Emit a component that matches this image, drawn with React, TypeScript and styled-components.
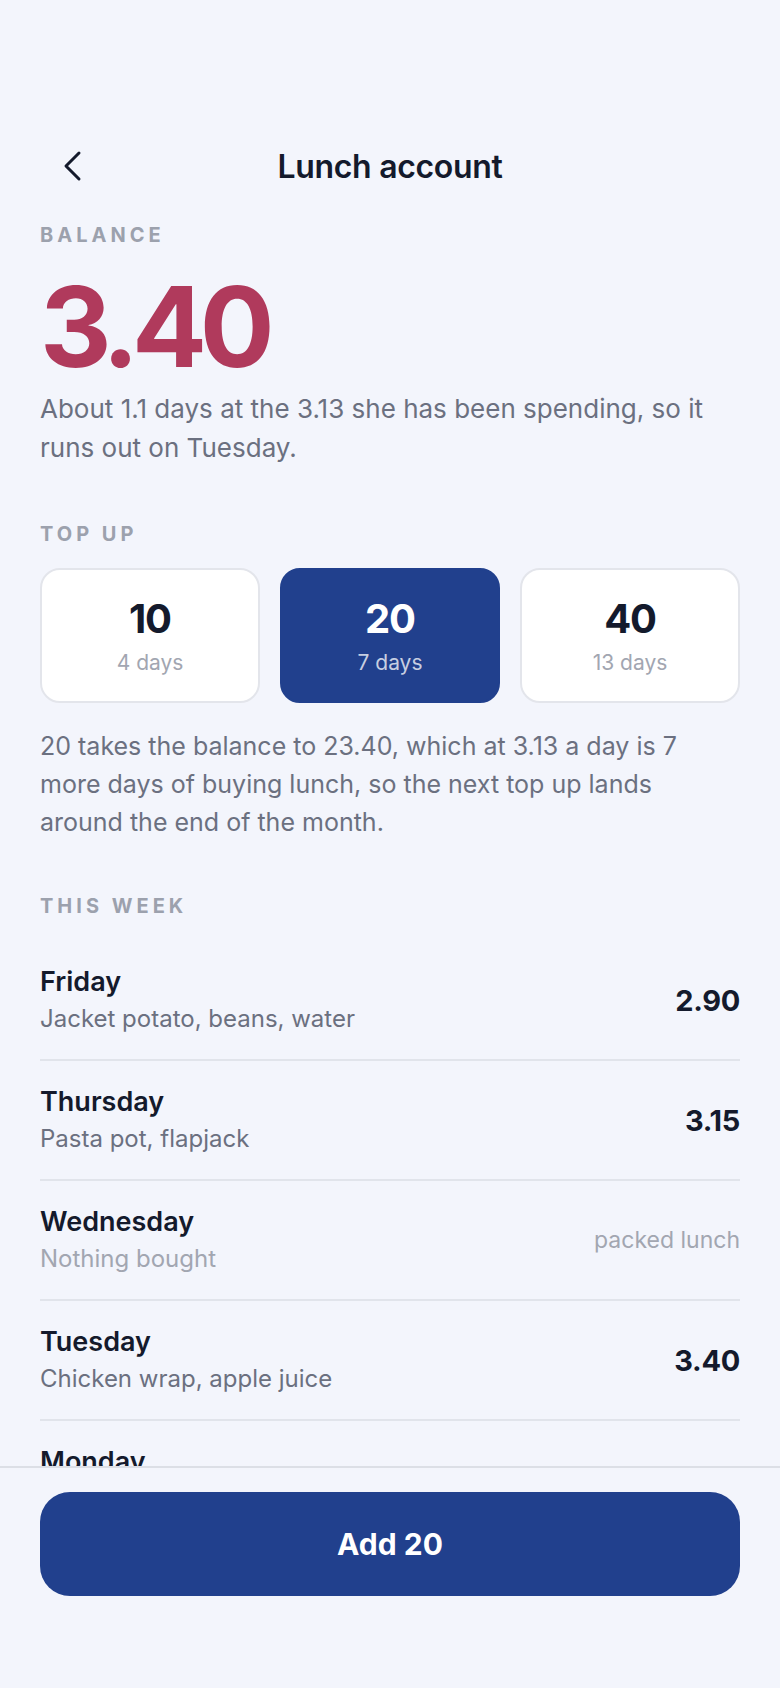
import styled, { createGlobalStyle } from 'styled-components';

const GlobalStyle = createGlobalStyle`
  * { box-sizing: border-box; }
  html, body {
    margin: 0;
    padding: 0;
    background: #f3f5fc;
    font-family: Inter, "Noto Sans", "Liberation Sans", sans-serif;
  }
`;

const Screen = styled.div`
  height: 100vh;
  display: flex;
  flex-direction: column;
  background: #f3f5fc;
  color: #141a2c;
`;

const Scroll = styled.main`
  flex: 1;
  min-height: 0;
  overflow: hidden;
  padding: 134px 40px 0;
`;

const Header = styled.header`
  height: 64px;
  display: grid;
  grid-template-columns: 1fr auto 1fr;
  align-items: center;
`;

const BackButton = styled.button`
  justify-self: start;
  width: 44px;
  height: 44px;
  margin-left: 10px;
  padding: 0;
  border: none;
  background: transparent;
  color: #141a2c;
  display: flex;
  align-items: center;
  justify-content: center;
  cursor: pointer;
`;

const Title = styled.h1`
  margin: 0;
  font-size: 32px;
  font-weight: 600;
  letter-spacing: -0.01em;
`;

const Eyebrow = styled.div<{ $top: number }>`
  margin-top: ${p => p.$top}px;
  font-size: 20px;
  line-height: 26px;
  font-weight: 700;
  letter-spacing: 0.2em;
  text-transform: uppercase;
  color: #9ca1ad;
`;

const Balance = styled.div`
  margin-top: 24px;
  font-size: 111px;
  line-height: 110px;
  font-weight: 700;
  letter-spacing: -0.065em;
  color: #b03a5c;
`;

const Note = styled.p<{ $top: number; $size: number; $lh: number }>`
  margin: ${p => p.$top}px 0 0;
  font-size: ${p => p.$size}px;
  line-height: ${p => p.$lh}px;
  color: #6b7080;
`;

const Options = styled.div`
  margin-top: 21px;
  display: grid;
  grid-template-columns: repeat(3, 1fr);
  gap: 20px;
`;

const Option = styled.button<{ $active?: boolean }>`
  height: 135px;
  border-radius: 20px;
  border: 2px solid ${p => (p.$active ? '#21408d' : '#e3e5eb')};
  background: ${p => (p.$active ? '#21408d' : '#ffffff')};
  display: flex;
  flex-direction: column;
  align-items: center;
  justify-content: center;
  gap: 6px;
  font-family: inherit;
  cursor: pointer;
`;

const OptionAmount = styled.span<{ $active?: boolean }>`
  font-size: 40px;
  line-height: 48px;
  font-weight: 700;
  letter-spacing: -0.03em;
  color: ${p => (p.$active ? '#ffffff' : '#141a2c')};
`;

const OptionDays = styled.span<{ $active?: boolean }>`
  font-size: 21px;
  line-height: 28px;
  color: ${p => (p.$active ? 'rgba(255,255,255,0.75)' : '#a2a6b1')};
`;

const List = styled.ul`
  margin: 22px 0 0;
  padding: 0;
  list-style: none;
`;

const Row = styled.li`
  display: flex;
  align-items: center;
  justify-content: space-between;
  padding: 25px 0;
  border-bottom: 2px solid #e1e4eb;
`;

const Day = styled.div`
  display: flex;
  flex-direction: column;
  gap: 6px;
`;

const DayName = styled.span`
  font-size: 27px;
  line-height: 32px;
  font-weight: 600;
  color: #141a2c;
`;

const Items = styled.span<{ $muted?: boolean }>`
  font-size: 24px;
  line-height: 30px;
  color: ${p => (p.$muted ? '#a2a6b1' : '#6b7080')};
`;

const Amount = styled.span`
  font-size: 29px;
  font-weight: 700;
  letter-spacing: -0.01em;
  color: #141a2c;
`;

const Skipped = styled.span`
  font-size: 23px;
  color: #a2a6b1;
`;

const Footer = styled.footer`
  flex-shrink: 0;
  border-top: 2px solid #dcdfe6;
  padding: 24px 40px 92px;
  background: #f3f5fc;
`;

const PrimaryButton = styled.button`
  width: 100%;
  height: 104px;
  border: none;
  border-radius: 30px;
  background: #21408d;
  color: #ffffff;
  font-family: inherit;
  font-size: 30px;
  font-weight: 700;
  cursor: pointer;
`;

const options = [
  { amount: 10, days: 4 },
  { amount: 20, days: 7 },
  { amount: 40, days: 13 },
];

const week = [
  { day: 'Friday', items: 'Jacket potato, beans, water', spent: '2.90' },
  { day: 'Thursday', items: 'Pasta pot, flapjack', spent: '3.15' },
  { day: 'Wednesday', items: 'Nothing bought', spent: null },
  { day: 'Tuesday', items: 'Chicken wrap, apple juice', spent: '3.40' },
  { day: 'Monday', items: 'Sandwich, fruit pot', spent: '2.95' },
];

export default function App() {
  const selected = 20;

  return (
    <Screen>
      <GlobalStyle />
      <Scroll>
        <Header>
          <BackButton aria-label="Back">
            <svg width="24" height="36" viewBox="0 0 24 36" fill="none">
              <polyline
                points="19,5 6,18 19,31"
                stroke="currentColor"
                strokeWidth="3"
                strokeLinecap="round"
                strokeLinejoin="round"
              />
            </svg>
          </BackButton>
          <Title>Lunch account</Title>
          <span />
        </Header>

        <Eyebrow $top={24}>Balance</Eyebrow>
        <Balance>3.40</Balance>
        <Note $top={8} $size={26} $lh={38.5}>
          About 1.1 days at the 3.13 she has been spending, so it runs out on Tuesday.
        </Note>

        <Eyebrow $top={54}>Top up</Eyebrow>
        <Options>
          {options.map(o => (
            <Option key={o.amount} $active={o.amount === selected}>
              <OptionAmount $active={o.amount === selected}>{o.amount}</OptionAmount>
              <OptionDays $active={o.amount === selected}>{o.days} days</OptionDays>
            </Option>
          ))}
        </Options>
        <Note $top={24} $size={25} $lh={38}>
          20 takes the balance to 23.40, which at 3.13 a day is 7 more days of buying lunch, so
          the next top up lands around the end of the month.
        </Note>

        <Eyebrow $top={52}>This week</Eyebrow>
        <List>
          {week.map(w => (
            <Row key={w.day}>
              <Day>
                <DayName>{w.day}</DayName>
                <Items $muted={!w.spent}>{w.items}</Items>
              </Day>
              {w.spent ? <Amount>{w.spent}</Amount> : <Skipped>packed lunch</Skipped>}
            </Row>
          ))}
        </List>
      </Scroll>
      <Footer>
        <PrimaryButton>Add {selected}</PrimaryButton>
      </Footer>
    </Screen>
  );
}
